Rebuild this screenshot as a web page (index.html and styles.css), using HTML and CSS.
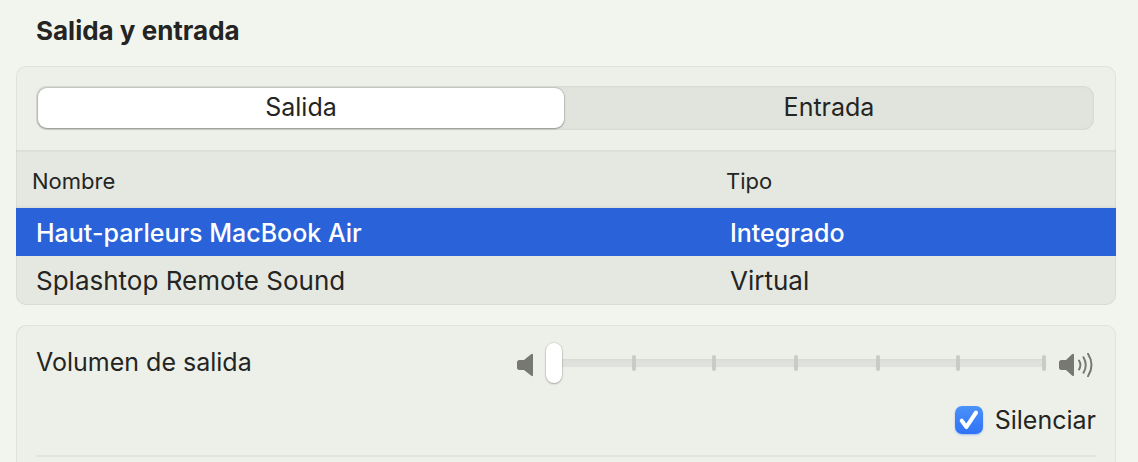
FILE: index.html
```html
<!DOCTYPE html>
<html lang="es">
<head>
<meta charset="utf-8">
<meta name="viewport" content="width=device-width, initial-scale=1">
<title>Salida y entrada</title>
<link rel="stylesheet" href="styles.css">
</head>
<body>
<main class="page">
  <h1 class="title">Salida y entrada</h1>

  <section class="card">
    <div class="switcher">
      <div class="segmented" role="tablist" aria-label="Salida y entrada">
        <button class="segment segment-active" type="button" role="tab" aria-selected="true">Salida</button>
        <button class="segment" type="button" role="tab" aria-selected="false">Entrada</button>
      </div>
    </div>
    <table class="devices">
      <thead>
        <tr><th class="col-name" scope="col">Nombre</th><th scope="col">Tipo</th></tr>
      </thead>
      <tbody>
        <tr class="selected"><td>Haut-parleurs MacBook Air</td><td>Integrado</td></tr>
        <tr><td>Splashtop Remote Sound</td><td>Virtual</td></tr>
      </tbody>
    </table>
  </section>

  <section class="card card-open">
    <div class="volume">
      <label class="volume-label" for="volume">Volumen de salida</label>
      <div class="volume-control">
        <svg class="speaker" width="16" height="24" viewBox="0 0 16 24" aria-hidden="true">
          <path d="M2.500 7H7L14 1.300Q16 0 16 2V22Q16 24 14 22.500L7 17H2.500Q0 17 0 14.500V9.500Q0 7 2.500 7Z"/>
        </svg>
        <div class="slider">
          <div class="ticks" aria-hidden="true"><i></i><i></i><i></i><i></i><i></i><i></i></div>
          <input class="range" id="volume" type="range" min="0" max="100" value="0">
        </div>
        <svg class="speaker" width="34" height="24" viewBox="0 0 34 24" aria-hidden="true">
          <path d="M2.500 7H7L13 1.300Q15 0 15 2V22Q15 24 13 22.500L7 17H2.500Q0 17 0 14.500V9.500Q0 7 2.500 7Z"/>
          <g class="waves">
            <path d="M20 7.500Q22.800 12 20 16.500"/>
            <path d="M24.500 4.200Q29 12 24.500 19.800"/>
            <path d="M29 .8Q36 12 29 23.200"/>
          </g>
        </svg>
      </div>
    </div>
    <div class="mute">
      <input class="check" id="mute" type="checkbox" checked>
      <label for="mute">Silenciar</label>
    </div>
    <hr class="divider">
  </section>
</main>
</body>
</html>
```

FILE: styles.css
```css
* { box-sizing: border-box; }

body {
  margin: 0;
  background: #f2f5ee;
  color: #242523;
  font: 400 25px/32px Inter, "Liberation Sans", sans-serif;
}

.page {
  display: flex;
  flex-direction: column;
  gap: 20px;
  min-height: 100vh;
  padding: 15px 22px 0 16px;
}

.title {
  margin: 0;
  padding: 0 20px;
  font-size: 26px;
  font-weight: 700;
  line-height: 31px;
}

.card {
  overflow: hidden;
  border-radius: 10px;
  background: #edf0e9;
  box-shadow: inset 0 0 0 1px #e0e3dc;
}

.card-open {
  flex: 1;
  padding: 17px 20px 0;
  border-radius: 10px 10px 0 0;
  box-shadow: inset 1px 1px #e0e3dc, inset -1px 0 #e0e3dc;
}

.switcher { padding: 20px 22px 20px 20px; }

.segmented {
  display: flex;
  gap: 2px;
  padding: 2px;
  border-radius: 11px;
  background: #e1e4dd;
  box-shadow: inset 0 0 2px 1px #d6d9d2;
}

.segment {
  flex: 1;
  height: 40px;
  padding: 0 0 2px;
  border: 0;
  border-radius: 9px;
  background: transparent;
  color: inherit;
  font: inherit;
}

.segment-active {
  background: #fff;
  box-shadow: 0 0 1px 1px rgba(0, 0, 0, .12), 0 1px 2px rgba(0, 0, 0, .25);
}

.devices {
  width: 100%;
  border-collapse: separate;
  border-spacing: 0;
  table-layout: fixed;
  background: rgba(0, 5, 0, .033);
  text-align: left;
}

.devices th {
  height: 58px;
  padding: 4px 16px 0;
  border: solid rgba(0, 0, 0, .03);
  border-width: 2px 0;
  font-size: 22px;
  font-weight: 400;
}

.devices .col-name { width: 694px; }

.devices td {
  height: 48px;
  padding: 2px 20px 0;
}

.devices tr:last-child td {
  height: 49px;
  padding-top: 0;
  font-size: 26px;
}

.devices .selected td {
  background: #2962d9;
  color: #fff;
  font-weight: 500;
}

.volume {
  display: flex;
  align-items: center;
  justify-content: space-between;
  height: 40px;
}

.volume-control {
  display: flex;
  align-items: center;
  gap: 13px;
  padding: 1px 3px 0 0;
}

.speaker {
  margin-top: 4px;
  fill: #777874;
}

.waves {
  fill: none;
  stroke: #777874;
  stroke-width: 2;
  stroke-linecap: round;
}

.slider {
  display: grid;
  width: 500px;
  height: 40px;
  align-items: center;
}

.ticks, .range { grid-area: 1 / 1; }

.ticks {
  display: grid;
  grid-template-columns: 80fr 80fr 82fr 82fr 80fr 86fr;
  grid-template-rows: 100%;
  align-items: center;
  justify-items: end;
  height: 8px;
  padding-left: 10px;
  border-radius: 4px;
  background: #dfe2dc;
  box-shadow: inset 0 1px 2px #d6d9d2;
}

.ticks i {
  width: 4px;
  height: 16px;
  border-radius: 2px;
  background: #c9cbc6;
}

.range {
  z-index: 1;
  width: 100%;
  height: 40px;
  margin: 0;
  appearance: none;
  background: transparent;
}

.range::-webkit-slider-thumb {
  appearance: none;
  width: 16px;
  height: 40px;
  border-radius: 8px;
  background: #fff;
  box-shadow: 0 0 1px 1px rgba(0, 0, 0, .08), 0 1px 2px rgba(0, 0, 0, .25);
}

.mute {
  display: flex;
  align-items: center;
  justify-content: flex-end;
  gap: 12px;
  padding-top: 22px;
}

.check {
  display: grid;
  width: 28px;
  height: 28px;
  margin: 0;
  place-items: center;
  appearance: none;
  border-radius: 7px;
  background: linear-gradient(#4a91f8, #2f73f5);
  box-shadow: 0 1px 2px rgba(47, 115, 245, .4);
}

.check:checked::before {
  width: 20px;
  height: 20px;
  background: #fff;
  clip-path: path("M2.200 8.800Q.300 9.900 1.200 11.600L6 18.300Q7.700 20 9.300 18.200L19.200 3.500Q19.900 1.500 18 .7Q16.500 .2 15.500 1.500L7.600 13.600L4.600 9.400Q3.400 8.200 2.200 8.800Z");
  content: "";
}

.divider {
  height: 2px;
  margin: 19px 0 0;
  border: 0;
  background: #e1e4dd;
}
```
